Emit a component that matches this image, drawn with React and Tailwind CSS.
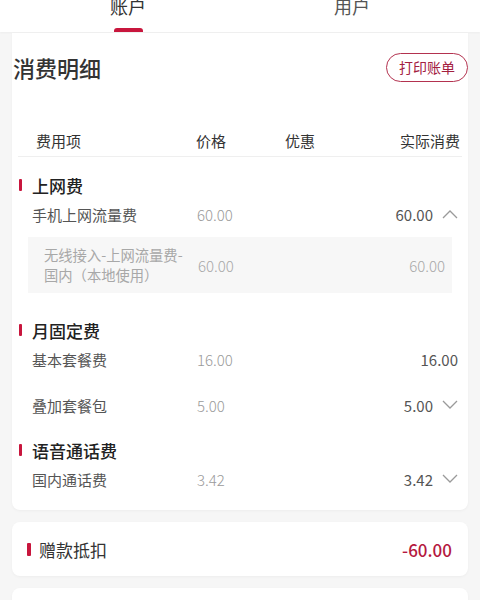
import React from "react";

const F = { fontFamily: '"Noto Sans CJK SC", "Noto Sans", sans-serif' };

function Chevron({ up }) {
  return (
    <svg width="16" height="10" viewBox="0 0 16 10" className="ml-[9px]">
      <path
        d={up ? "M1 9 L8 2 L15 9" : "M1 1 L8 8 L15 1"}
        fill="none"
        stroke="#9a9a9a"
        strokeWidth="1.3"
      />
    </svg>
  );
}

function SectionTitle({ children }) {
  return (
    <div className="flex h-[30px] items-center">
      <div className="ml-[1px] h-[12px] w-[3px] rounded-[1px] bg-[#c8163d]" />
      <div className="ml-[10px] text-[17px] font-medium leading-none text-[#222]">{children}</div>
    </div>
  );
}

function Item({ name, price, value, chevron }) {
  return (
    <div className="flex h-[28px] items-center">
      <div className="w-[179px] pl-[14px] text-[15px] leading-none text-[#555]">{name}</div>
      <div className="w-[89px] text-[15px] font-light leading-none text-[#9a9a9a]">{price}</div>
      <div className="flex flex-1 items-center justify-end pr-[4px]">
        <span className="text-[15px] leading-none text-[#555]">{value}</span>
        {chevron ? <Chevron up={chevron === "up"} /> : null}
      </div>
    </div>
  );
}

export default function App() {
  return (
    <div style={F} className="h-[600px] w-[480px] overflow-hidden bg-[#f6f6f6]">
      {/* tab bar */}
      <div className="grid h-[32px] grid-cols-2 bg-white px-[16px] shadow-[0_1px_2px_rgba(0,0,0,0.04)]">
        <div className="flex flex-col items-center">
          <div className="-mt-[6px] text-[18px] leading-[24px] text-[#333]">账户</div>
          <div className="mt-auto h-[4px] w-[29px] rounded-t-[3px] bg-[#c8163d]" />
        </div>
        <div className="flex flex-col items-center">
          <div className="-mt-[6px] text-[18px] leading-[24px] text-[#555]">用户</div>
        </div>
      </div>

      {/* card 1 */}
      <div className="mx-[12px] mt-[1px] rounded-b-[8px] bg-white pt-[19px] pb-[17px] shadow-[0_1px_3px_rgba(0,0,0,0.04)]">
        <div className="flex h-[30px] items-center justify-between">
          <div className="ml-[1px] text-[22px] font-medium leading-none text-[#333]">消费明细</div>
          <div className="flex h-[29px] w-[82px] items-center justify-center rounded-full border-[1.5px] border-[#b3324f] text-[14px] leading-none text-[#a3203f]">
            打印账单
          </div>
        </div>

        <div className="mx-[6px] mt-[44px]">
          <div className="flex h-[31px] items-center border-b border-[#efefef] pb-[1px] text-[15px] leading-none text-[#333]">
            <div className="w-[178px] pl-[18px]">费用项</div>
            <div className="w-[89px]">价格</div>
            <div className="flex-1">优惠</div>
            <div className="pr-[2px]">实际消费</div>
          </div>

          <div className="mt-[13px]">
            <SectionTitle>上网费</SectionTitle>
            <Item name="手机上网流量费" price="60.00" value="60.00" chevron="up" />
            <div className="mx-[10px] mt-[9px] flex h-[56px] items-center bg-[#f7f7f7]">
              <div className="w-[170px] pl-[16px] text-[14.3px] leading-[20px] text-[#a8a8a8]">
                <div className="whitespace-nowrap">无线接入-上网流量费-</div>
                <div>国内（本地使用）</div>
              </div>
              <div className="w-[100px] text-[15px] font-light leading-none text-[#a8a8a8]">60.00</div>
              <div className="flex-1 pr-[7px] text-right text-[15px] font-light leading-none text-[#a8a8a8]">60.00</div>
            </div>
          </div>

          <div className="mt-[22px]">
            <SectionTitle>月固定费</SectionTitle>
            <Item name="基本套餐费" price="16.00" value="16.00" />
            <div className="mt-[18px]">
              <Item name="叠加套餐包" price="5.00" value="5.00" chevron="down" />
            </div>
          </div>

          <div className="mt-[16px]">
            <SectionTitle>语音通话费</SectionTitle>
            <Item name="国内通话费" price="3.42" value="3.42" chevron="down" />
          </div>
        </div>
      </div>

      {/* card 2 */}
      <div className="mx-[12px] mt-[12px] flex h-[54px] items-center rounded-[8px] bg-white pl-[15px] pr-[16px] shadow-[0_1px_3px_rgba(0,0,0,0.04)]">
        <div className="h-[13px] w-[4px] rounded-[1px] bg-[#c8163d]" />
        <div className="ml-[8px] flex-1 text-[17px] leading-none text-[#333]">赠款抵扣</div>
        <div className="text-[17px] font-medium leading-none text-[#b5193f]">-60.00</div>
      </div>

      {/* card 3 */}
      <div className="mx-[12px] mt-[12px] h-[60px] rounded-[8px] bg-white shadow-[0_1px_3px_rgba(0,0,0,0.04)]" />
    </div>
  );
}
